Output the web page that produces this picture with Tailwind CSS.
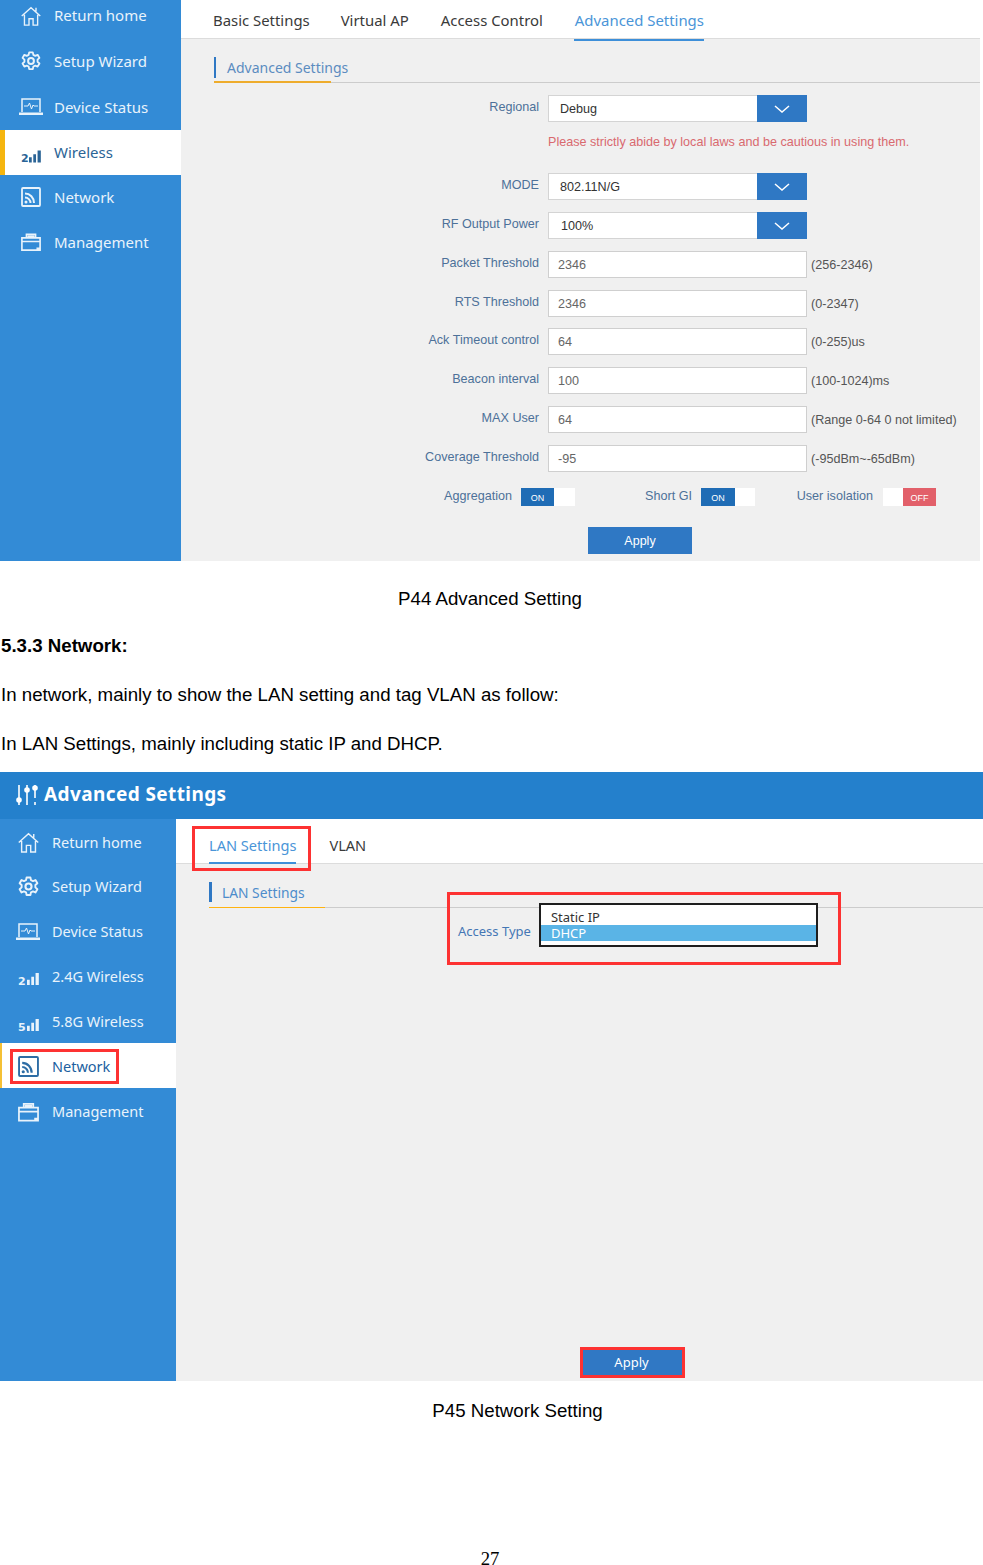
<!DOCTYPE html>
<html lang="en">
  <head>
    <meta charset="UTF-8" />
    <meta name="viewport" content="width=device-width, initial-scale=1.0" />
    <title>P44 Advanced Setting</title>
    <script src="https://cdn.jsdelivr.net/npm/@tailwindcss/browser@4"></script>
  </head>
  <body class="bg-white">
    <svg class="hidden">
      <symbol id="i-home" viewBox="0 0 22 22"><path d="M.8 11 11 1.800 21.200 11M3.800 9.500V21h5v-7h4.500v7h5V9.500M16.500 2v4" fill="none" stroke="currentColor" stroke-width="1.500"/></symbol>
      <symbol id="i-gear" viewBox="0 0 22 22"><circle cx="11" cy="11" r="3.200" fill="none" stroke="currentColor" stroke-width="2.200"/><path d="M9 1.500h4l.6 2.800 2.100 1 2.600-1.100 2 3.400-2.100 1.900v2.400l2.100 1.900-2 3.400-2.600-1.100-2.100 1-.6 2.800H9l-.6-2.800-2.100-1-2.600 1.100-2-3.400 2.100-1.900V9.500L1.700 7.600l2-3.400 2.600 1.100 2.100-1z" fill="none" stroke="currentColor" stroke-width="2" stroke-linejoin="round"/></symbol>
      <symbol id="i-status" viewBox="0 0 24 20"><path d="M3 15V2h18v13" fill="none" stroke="currentColor" stroke-width="1.500"/><path d="M0 15.500h24V18H0z" fill="currentColor"/><path d="M5 9h4l1.500-3 2 6 1.500-4 1 1h4" fill="none" stroke="currentColor" stroke-width="1"/></symbol>
      <symbol id="i-net" viewBox="0 0 20 20"><rect x="1" y="1" width="18" height="18" rx="1" fill="none" stroke="currentColor" stroke-width="1.800"/><path d="M4 6.500c5 0 9 4 9 9.500M4 10.500c3 0 5.500 2.500 5.500 5.500" fill="none" stroke="currentColor" stroke-width="2"/><circle cx="5" cy="15" r="1.500" fill="currentColor"/></symbol>
      <symbol id="i-mgmt" viewBox="0 0 22 20"><path d="M1 5.500h20V19H1zM1 9.500h20M6 5.500V1.500h10v4" fill="none" stroke="currentColor" stroke-width="1.800"/><path d="M7 2.500h8v3H7zM17 16h4v3h-4z" fill="currentColor"/></symbol>
      <symbol id="i-bars" viewBox="0 0 14 14"><path d="M0 14V8h3.200v6zM5 14V4.500h3.200V14zM10 14V0h3.800v14z" fill="currentColor"/></symbol>
      <symbol id="i-chev" viewBox="0 0 16 8"><path d="M1 1l7 6 7-6" fill="none" stroke="currentColor" stroke-width="1.500"/></symbol>
    </svg>

    <div class="h-[1565px] overflow-hidden flex flex-col font-['Liberation_Sans',Arial,sans-serif]">
      <!-- first screenshot -->
      <section class="w-[980px] h-[561px] shrink-0 flex bg-[#f0f0f0]">
        <nav class="w-[181px] shrink-0 bg-[#338bd6] text-[#e9f3fb] text-[15px] font-['Noto_Sans',sans-serif]">
          <a class="flex items-center h-[45px] -mt-[6px] pl-[21px] gap-[13px] pb-[2px]"><svg class="w-[20px] h-[20px]"><use href="#i-home" /></svg>Return home</a>
          <a class="flex items-center h-[45px] pl-[21px] gap-[13px] pb-[1px]"><svg class="w-[20px] h-[20px]"><use href="#i-gear" /></svg>Setup Wizard</a>
          <a class="flex items-center h-[46px] pl-[19px] gap-[11px]"><svg class="w-[24px] h-[20px]"><use href="#i-status" /></svg>Device Status</a>
          <a class="flex items-center h-[45px] pl-[16px] gap-[13px] border-l-[5px] border-[#f5b50f] bg-white text-[#2b6496] pb-[1px]">
            <span class="relative w-[20px] h-[13px] mt-[9px] block">
              <span class="absolute left-0 bottom-0 text-[11px] leading-[9px] font-bold font-['DejaVu_Sans',sans-serif]">2</span>
              <svg class="absolute right-0 bottom-0 w-[12px] h-[13px]"><use href="#i-bars" /></svg>
            </span>Wireless</a>
          <a class="flex items-center h-[45px] pl-[21px] gap-[13px] pb-[1px]"><svg class="w-[20px] h-[20px]"><use href="#i-net" /></svg>Network</a>
          <a class="flex items-center h-[45px] pl-[21px] gap-[13px] pb-[1px]"><svg class="w-[20px] h-[20px]"><use href="#i-mgmt" /></svg>Management</a>
        </nav>

        <main class="flex-1 min-w-0">
          <div class="h-[39px] bg-white border-b border-[#dcdcdc] flex gap-[31px] pl-[32px] text-[14.900px] text-[#3a3a3a] font-['Noto_Sans',sans-serif]">
            <a class="pt-[9px]">Basic Settings</a>
            <a class="pt-[9px]">Virtual AP</a>
            <a class="pt-[9px] pl-px">Access Control</a>
            <a class="pt-[9px] pl-px h-[41px] border-b-2 border-[#3d8fd9] text-[#4a95d8]">Advanced Settings</a>
          </div>

          <div class="relative mt-[18px] ml-[33px] h-[26px] border-b border-[#cccccc]">
            <h2 class="border-l-2 border-[#2f78c4] pl-[11px] h-[21px] text-[14px] leading-[21px] text-[#5b8cc0] font-['Noto_Sans',sans-serif]">Advanced Settings</h2>
            <span class="absolute left-0 -bottom-px w-[117px] h-[2px] bg-[#eeac2c]"></span>
          </div>

          <form class="mt-[12px] text-[12.600px] text-[#333]">
            <div class="flex items-center h-[27px]">
              <label class="w-[358px] pr-0 text-right text-[#4d7199] -mt-[3px]">Regional</label>
              <div class="ml-[9px] w-[259px] h-[27px] flex bg-white border border-[#d4d4d4]"><span class="flex-1 pl-[11px] leading-[26px]">Debug</span><span class="w-[50px] -m-px ml-0 bg-[#2f78c4] text-white flex items-center justify-center"><svg class="w-[16px] h-[8px]"><use href="#i-chev" /></svg></span></div>
            </div>
            <p class="h-[51px] pl-[367px] pt-[11px] text-[#d9696f]">Please strictly abide by local laws and be cautious in using them.</p>

            <div class="flex flex-col gap-[12px]">
              <div class="flex items-center h-[27px]">
                <label class="w-[358px] text-right text-[#4d7199] -mt-[3px]">MODE</label>
                <div class="ml-[9px] w-[259px] h-[27px] flex bg-white border border-[#d4d4d4]"><span class="flex-1 pl-[11px] leading-[26px]">802.11N/G</span><span class="w-[50px] -m-px ml-0 bg-[#2f78c4] text-white flex items-center justify-center"><svg class="w-[16px] h-[8px]"><use href="#i-chev" /></svg></span></div>
              </div>
              <div class="flex items-center h-[27px]">
                <label class="w-[358px] text-right text-[#4d7199] -mt-[3px]">RF Output Power</label>
                <div class="ml-[9px] w-[259px] h-[27px] flex bg-white border border-[#d4d4d4]"><span class="flex-1 pl-[12px] leading-[26px]">100%</span><span class="w-[50px] -m-px ml-0 bg-[#2f78c4] text-white flex items-center justify-center"><svg class="w-[16px] h-[8px]"><use href="#i-chev" /></svg></span></div>
              </div>
              <div class="flex items-center h-[27px]">
                <label class="w-[358px] text-right text-[#4d7199] -mt-[3px]">Packet Threshold</label>
                <div class="ml-[9px] w-[259px] h-[27px] bg-white border border-[#cfcfcf] pl-[9px] leading-[26px] text-[#666]">2346</div>
                <span class="ml-[4px] mt-[2px] text-[#555]">(256-2346)</span>
              </div>
              <div class="flex items-center h-[27px]">
                <label class="w-[358px] text-right text-[#4d7199] -mt-[3px]">RTS Threshold</label>
                <div class="ml-[9px] w-[259px] h-[27px] bg-white border border-[#cfcfcf] pl-[9px] leading-[26px] text-[#666]">2346</div>
                <span class="ml-[4px] mt-[2px] text-[#555]">(0-2347)</span>
              </div>
              <div class="flex items-center h-[27px] -mt-px">
                <label class="w-[358px] text-right text-[#4d7199] -mt-[3px]">Ack Timeout control</label>
                <div class="ml-[9px] w-[259px] h-[27px] bg-white border border-[#cfcfcf] pl-[9px] leading-[26px] text-[#666]">64</div>
                <span class="ml-[4px] mt-[2px] text-[#555]">(0-255)us</span>
              </div>
              <div class="flex items-center h-[27px]">
                <label class="w-[358px] text-right text-[#4d7199] -mt-[3px]">Beacon interval</label>
                <div class="ml-[9px] w-[259px] h-[27px] bg-white border border-[#cfcfcf] pl-[9px] leading-[26px] text-[#666]">100</div>
                <span class="ml-[4px] mt-[2px] text-[#555]">(100-1024)ms</span>
              </div>
              <div class="flex items-center h-[27px]">
                <label class="w-[358px] text-right text-[#4d7199] -mt-[3px]">MAX User</label>
                <div class="ml-[9px] w-[259px] h-[27px] bg-white border border-[#cfcfcf] pl-[9px] leading-[26px] text-[#666]">64</div>
                <span class="ml-[4px] mt-[2px] text-[#555]">(Range 0-64 0 not limited)</span>
              </div>
              <div class="flex items-center h-[27px]">
                <label class="w-[358px] text-right text-[#4d7199] -mt-[3px]">Coverage Threshold</label>
                <div class="ml-[9px] w-[259px] h-[27px] bg-white border border-[#cfcfcf] pl-[9px] leading-[26px] text-[#666]">-95</div>
                <span class="ml-[4px] mt-[2px] text-[#555]">(-95dBm~-65dBm)</span>
              </div>
            </div>

            <div class="mt-[16px] flex items-center h-[18px] text-[#4d7199]">
              <span class="w-[331px] text-right -mt-[2px]">Aggregation</span>
              <span class="ml-[9px] w-[54px] h-[18px] flex bg-white"><span class="w-[33px] bg-[#1f6cb5] text-white text-[9px] leading-[20px] text-center">ON</span></span>
              <span class="w-[117px] text-right -mt-[2px]">Short GI</span>
              <span class="ml-[9px] w-[54px] h-[18px] flex bg-white"><span class="w-[34px] bg-[#1f6cb5] text-white text-[9px] leading-[20px] text-center">ON</span></span>
              <span class="w-[118px] text-right -mt-[2px]">User isolation</span>
              <span class="ml-[10px] w-[53px] h-[18px] flex justify-end bg-white"><span class="w-[33px] bg-[#e2606a] text-white text-[9px] leading-[20px] text-center">OFF</span></span>
            </div>

            <button type="button" class="block mt-[21px] ml-[407px] w-[104px] h-[27px] pt-[2px] bg-[#2f78c4] text-white text-[12.500px]">Apply</button>
          </form>
        </main>
      </section>

      <!-- document text -->
      <div class="shrink-0 h-[211px] pt-[13px] text-[18.700px] text-black">
        <p class="text-center -ml-[3px] leading-[49px] h-[47px]">P44 Advanced Setting</p>
        <p class="pl-px font-bold leading-[49px]">5.3.3 Network:</p>
        <p class="pl-px leading-[49px]">In network, mainly to show the LAN setting and tag VLAN as follow:</p>
        <p class="pl-px leading-[49px]">In LAN Settings, mainly including static IP and DHCP.</p>
      </div>

      <!-- second screenshot -->
      <section class="w-[983px] h-[609px] shrink-0 flex flex-col bg-[#f0f0f0] font-['Noto_Sans',sans-serif]">
        <header class="h-[47px] shrink-0 bg-[#2480cc] flex items-center pl-[16px] gap-[6px] text-white pb-[2px]">
          <svg class="w-[22px] h-[22px]" viewBox="0 0 22 22" fill="none" stroke="currentColor" stroke-width="1.600"><path d="M3 1v13M3 18v3M11 1v3M11 8v13M19 1v13M19 18v3" /><circle cx="3" cy="16" r="2" fill="currentColor" /><circle cx="11" cy="6" r="2" fill="currentColor" /><circle cx="19" cy="4" r="2" fill="currentColor" /></svg>
          <h1 class="text-[19px] font-bold tracking-[0.400px]">Advanced Settings</h1>
        </header>
        <div class="flex flex-1 min-h-0">
          <nav class="w-[176px] shrink-0 bg-[#338bd6] text-[#e9f3fb] text-[14.500px] pt-px">
            <a class="flex items-center h-[45px] pl-[18px] gap-[13px]"><svg class="w-[21px] h-[21px]"><use href="#i-home" /></svg>Return home</a>
            <a class="flex items-center h-[45px] pl-[18px] gap-[13px] pb-[2px]"><svg class="w-[21px] h-[21px]"><use href="#i-gear" /></svg>Setup Wizard</a>
            <a class="flex items-center h-[44px] pl-[16px] gap-[12px]"><svg class="w-[24px] h-[20px]"><use href="#i-status" /></svg>Device Status</a>
            <a class="flex items-center h-[45px] pl-[18px] gap-[13px]">
              <span class="relative w-[21px] h-[13px] mt-[6px] block">
                <span class="absolute left-0 bottom-0 text-[11px] leading-[9px] font-bold font-['DejaVu_Sans',sans-serif]">2</span>
                <svg class="absolute right-0 bottom-0 w-[12px] h-[14px]"><use href="#i-bars" /></svg>
              </span>2.4G Wireless</a>
            <a class="flex items-center h-[44px] pl-[18px] gap-[13px] pt-[2px]">
              <span class="relative w-[21px] h-[13px] mt-[6px] block">
                <span class="absolute left-0 bottom-0 text-[11px] leading-[9px] font-bold font-['DejaVu_Sans',sans-serif]">5</span>
                <svg class="absolute right-0 bottom-0 w-[12px] h-[14px]"><use href="#i-bars" /></svg>
              </span>5.8G Wireless</a>
            <a class="relative flex items-center h-[45px] pl-[16px] gap-[13px] pt-[2px] border-l-2 border-[#f5c035] bg-white text-[#215f9f]">
              <svg class="w-[21px] h-[21px] text-[#2d6da5]"><use href="#i-net" /></svg>Network
              <span class="absolute left-[8px] top-[6px] w-[109px] h-[35px] border-[3px] border-[#fd3232]"></span>
            </a>
            <a class="flex items-center h-[45px] pl-[18px] gap-[13px] pt-[2px]"><svg class="w-[21px] h-[20px]"><use href="#i-mgmt" /></svg>Management</a>
          </nav>

          <main class="relative flex-1 min-w-0 flex flex-col">
            <div class="relative h-[45px] shrink-0 bg-white border-b border-[#dcdcdc] flex gap-[33px] pl-[33px] text-[14.600px] text-[#3a3a3a]">
              <a class="pt-[16px] h-[45px] border-b-2 border-[#3d8fd9] text-[#4a95d8]">LAN Settings</a>
              <a class="pt-[16px]">VLAN</a>
              <span class="absolute left-[16px] top-[7px] w-[119px] h-[45px] border-[3px] border-[#fd3232]"></span>
            </div>

            <div class="relative mt-[18px] ml-[33px] h-[26px] border-b border-[#cccccc]">
              <h2 class="border-l-[3px] border-[#2f78c4] pl-[10px] h-[20px] text-[13.800px] leading-[21px] text-[#4d8ccb]">LAN Settings</h2>
              <span class="absolute left-0 -bottom-px w-[116px] h-px bg-[#ffb310]"></span>
            </div>

            <div class="relative flex items-start pl-[282px] -mt-[5px] text-[13px]">
              <span class="absolute left-[271px] -top-[11px] w-[394px] h-[73px] border-[3px] border-[#fd3232]"></span>
              <label class="mt-[19px] text-[#4577b5]">Access Type</label>
              <div class="ml-[8px] w-[279px] h-[44px] border-[2.500px] border-[#1e1e1e] bg-white leading-[15px] text-[#333] pt-[5px]">
                <div class="pl-[10px] h-[15px]">Static IP</div>
                <div class="pl-[10px] h-[16px] leading-[17px] bg-[#5ab4e6] text-white">DHCP</div>
              </div>
            </div>

            <div class="mt-auto mb-[3px] ml-[404px] w-[105px] h-[31px] border-[3px] border-[#fd3232] bg-[#3078c4] text-white text-[13px] leading-[24px] text-center pr-[2px]">Apply</div>
          </main>
        </div>
      </section>

      <p class="mt-[5px] h-[49px] shrink-0 text-center pl-[52px] text-[18.700px] leading-[49px] text-black">P45 Network Setting</p>
      <p class="mt-[117px] pr-[3px] text-center font-['Liberation_Serif',serif] text-[18.700px] leading-[14px] text-black">27</p>
    </div>
  </body>
</html>
